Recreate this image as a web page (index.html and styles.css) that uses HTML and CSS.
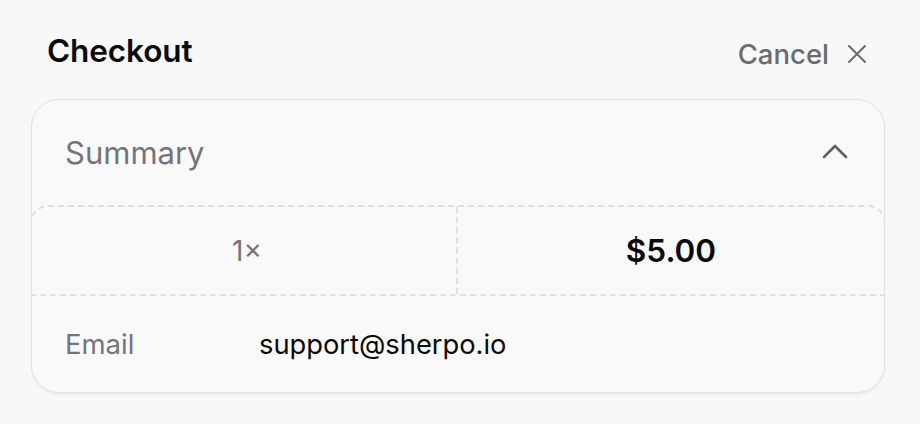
FILE: index.html
```html
<!DOCTYPE html>
<html>
<head>
<meta charset="utf-8">
<link rel="stylesheet" href="styles.css">
</head>
<body>
<div class="page">
  <header class="top">
    <h1 class="title">Checkout</h1>
    <button class="cancel">Cancel
      <svg class="x" viewBox="0 0 20 20" width="20" height="20"><path d="M2 2 L18 18 M18 2 L2 18" stroke="#6b6b70" stroke-width="2" fill="none" stroke-linecap="round"/></svg>
    </button>
  </header>
  <section class="card">
    <div class="summary">
      <span class="summary-label">Summary</span>
      <svg class="chev" viewBox="0 0 26 16" width="26" height="16"><path d="M2 14 L13 3 L24 14" stroke="#5f5f64" stroke-width="2.6" fill="none" stroke-linecap="round" stroke-linejoin="round"/></svg>
    </div>
    <div class="items">
      <div class="qty">1×</div>
      <div class="price">$5.00</div>
    </div>
    <div class="email-row">
      <span class="email-label">Email</span>
      <span class="email-value">support@sherpo.io</span>
    </div>
  </section>
</div>
</body>
</html>
```

FILE: styles.css
```css
html, body {
  margin: 0;
  padding: 0;
  background: #f8f8f8;
  font-family: Inter, "Noto Sans", sans-serif;
}
.page {
  width: 920px;
  height: 424px;
  box-sizing: border-box;
  padding: 0 35px 0 31px;
}
.top {
  height: 99px;
  display: flex;
  align-items: center;
  justify-content: space-between;
  padding: 0 18px 0 16px;
  box-sizing: border-box;
}
.title {
  margin: 0;
  font-size: 31.5px;
  font-weight: 600;
  color: #0a0a0a;
  letter-spacing: -0.1px;
  position: relative;
  top: 1px;
}
.cancel {
  display: flex;
  align-items: center;
  gap: 18px;
  background: none;
  border: 0;
  padding: 0;
  font-family: inherit;
  font-size: 27.5px;
  font-weight: 500;
  color: #6b6b70;
  position: relative;
  top: 4px;
}
.card {
  border: 1.5px solid #e1e1e1;
  border-radius: 28px;
  background: #f9f9f9;
  box-shadow: 0 2px 3px rgba(0,0,0,0.05);
  height: 294px;
  box-sizing: border-box;
  overflow: hidden;
}
.summary {
  height: 105px;
  display: flex;
  align-items: center;
  justify-content: space-between;
  padding: 0 36px 0 33px;
}
.summary-label {
  font-size: 31px;
  color: #74747b;
}
.chev { position: relative; top: -2px; }
.items {
  height: 91px;
  box-sizing: border-box;
  display: grid;
  grid-template-columns: 1fr 1fr;
  border: 2px dashed #e0e0e0;
  border-radius: 18px 18px 0 0;
  margin: 0 -2px;
}
.qty, .price {
  display: flex;
  align-items: center;
  justify-content: center;
}
.qty {
  border-right: 2px dashed #e0e0e0;
  font-size: 28px;
  color: #74747b;
  padding-left: 6px;
}
.price {
  font-size: 31.5px;
  font-weight: 600;
  color: #0a0a0a;
}
.email-row {
  height: 96px;
  display: flex;
  align-items: center;
  padding-left: 33px;
}
.email-label {
  width: 194px;
  font-size: 27.5px;
  color: #74747b;
}
.email-value {
  font-size: 27.3px;
  color: #0a0a0a;
}
```
